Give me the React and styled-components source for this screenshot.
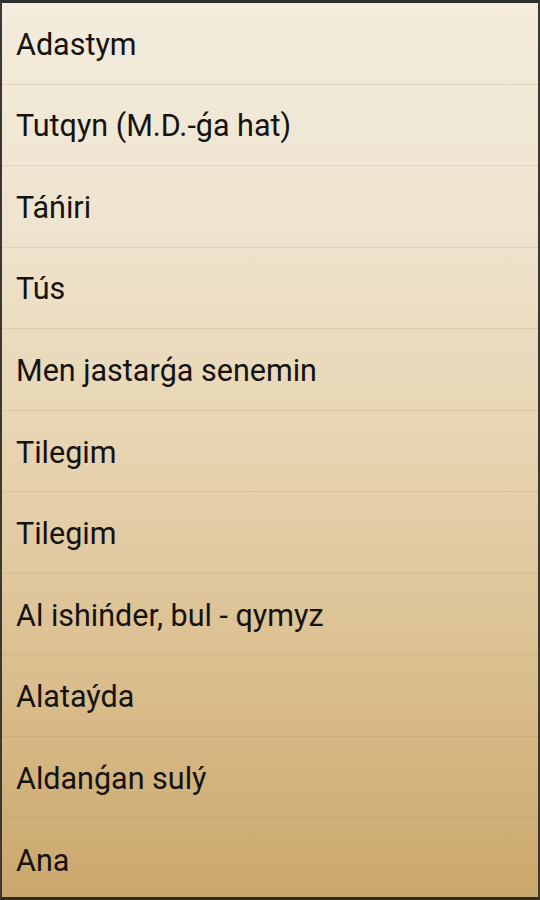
import React from 'react'
import styled, { createGlobalStyle } from 'styled-components'

const items = [
  'Adastym',
  'Tutqyn (M.D.-ǵa hat)',
  'Táńiri',
  'Tús',
  'Men jastarǵa senemin',
  'Tilegim',
  'Tilegim',
  'Al ishińder, bul - qymyz',
  'Alataýda',
  'Aldanǵan sulý',
  'Ana',
]

const GlobalStyle = createGlobalStyle`
  html, body {
    margin: 0;
    padding: 0;
    background: #2b2b2b;
  }
  * {
    box-sizing: border-box;
  }
`

const Screen = styled.div`
  width: 540px;
  height: 900px;
  border-top: 3px solid #2e2e2a;
  border-bottom: 3px solid #2e2a22;
  border-left: 2px solid #3a3832;
  border-right: 2px solid #3a3832;
  background: linear-gradient(180deg, #f3ebdd 0%, #efe4cf 25%, #e5d0aa 55%, #d7ba87 80%, #caa76c 100%);
  display: flex;
  flex-direction: column;
  overflow: hidden;
`

const Row = styled.div`
  flex: 0 0 81.55px;
  display: flex;
  align-items: center;
  padding: 2px 0 0 14px;
  border-bottom: 1px solid rgba(150, 120, 70, 0.16);
  font-family: Roboto, 'Noto Sans', sans-serif;
  font-size: 30.5px;
  color: #151310;
  white-space: nowrap;
  &:last-child {
    border-bottom: none;
  }
`

const App = () => (
  <>
    <GlobalStyle />
    <Screen>
      {items.map((t, i) => (
        <Row key={i}>{t}</Row>
      ))}
    </Screen>
  </>
)

export default App
